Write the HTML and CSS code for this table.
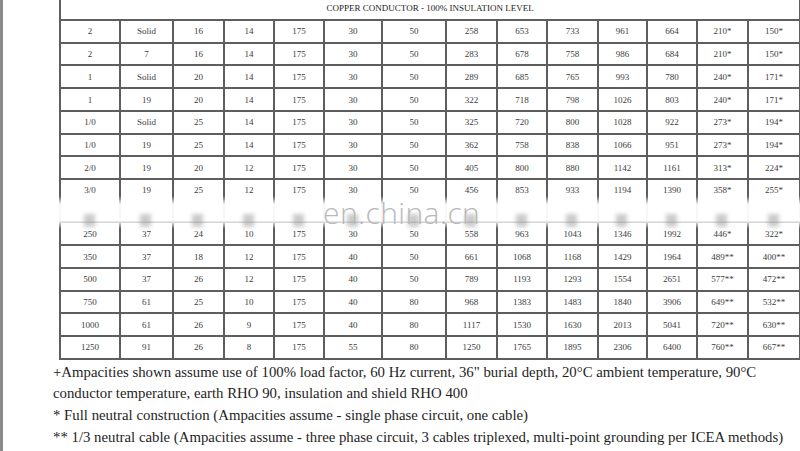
FILE: index.html
```html
<!DOCTYPE html>
<html>
<head>
<meta charset="utf-8">
<link rel="stylesheet" href="styles.css">
</head>
<body>
<div class="page">
  <div class="table-wrap">
    <table class="amp">
      <colgroup>
        <col class="c1"><col class="c2"><col class="c3"><col class="c4"><col class="c5"><col class="c6"><col class="c7"><col class="c8"><col class="c9"><col class="c10"><col class="c11"><col class="c12"><col class="c13"><col class="c14">
      </colgroup>
      <tr class="head"><td colspan="14">COPPER CONDUCTOR - 100% INSULATION LEVEL</td></tr>
      <tr><td>2</td><td>Solid</td><td>16</td><td>14</td><td>175</td><td>30</td><td>50</td><td>258</td><td>653</td><td>733</td><td>961</td><td>664</td><td>210*</td><td>150*</td></tr>
      <tr><td>2</td><td>7</td><td>16</td><td>14</td><td>175</td><td>30</td><td>50</td><td>283</td><td>678</td><td>758</td><td>986</td><td>684</td><td>210*</td><td>150*</td></tr>
      <tr><td>1</td><td>Solid</td><td>20</td><td>14</td><td>175</td><td>30</td><td>50</td><td>289</td><td>685</td><td>765</td><td>993</td><td>780</td><td>240*</td><td>171*</td></tr>
      <tr><td>1</td><td>19</td><td>20</td><td>14</td><td>175</td><td>30</td><td>50</td><td>322</td><td>718</td><td>798</td><td>1026</td><td>803</td><td>240*</td><td>171*</td></tr>
      <tr><td>1/0</td><td>Solid</td><td>25</td><td>14</td><td>175</td><td>30</td><td>50</td><td>325</td><td>720</td><td>800</td><td>1028</td><td>922</td><td>273*</td><td>194*</td></tr>
      <tr><td>1/0</td><td>19</td><td>25</td><td>14</td><td>175</td><td>30</td><td>50</td><td>362</td><td>758</td><td>838</td><td>1066</td><td>951</td><td>273*</td><td>194*</td></tr>
      <tr><td>2/0</td><td>19</td><td>20</td><td>12</td><td>175</td><td>30</td><td>50</td><td>405</td><td>800</td><td>880</td><td>1142</td><td>1161</td><td>313*</td><td>224*</td></tr>
      <tr class="before-gap"><td>3/0</td><td>19</td><td>25</td><td>12</td><td>175</td><td>30</td><td>50</td><td>456</td><td>853</td><td>933</td><td>1194</td><td>1390</td><td>358*</td><td>255*</td></tr>
      <tr class="gap"><td></td><td></td><td></td><td></td><td></td><td></td><td></td><td></td><td></td><td></td><td></td><td></td><td></td><td></td></tr>
      <tr><td>250</td><td>37</td><td>24</td><td>10</td><td>175</td><td>30</td><td>50</td><td>558</td><td>963</td><td>1043</td><td>1346</td><td>1992</td><td>446*</td><td>322*</td></tr>
      <tr><td>350</td><td>37</td><td>18</td><td>12</td><td>175</td><td>40</td><td>50</td><td>661</td><td>1068</td><td>1168</td><td>1429</td><td>1964</td><td>489**</td><td>400**</td></tr>
      <tr><td>500</td><td>37</td><td>26</td><td>12</td><td>175</td><td>40</td><td>50</td><td>789</td><td>1193</td><td>1293</td><td>1554</td><td>2651</td><td>577**</td><td>472**</td></tr>
      <tr><td>750</td><td>61</td><td>25</td><td>10</td><td>175</td><td>40</td><td>80</td><td>968</td><td>1383</td><td>1483</td><td>1840</td><td>3906</td><td>649**</td><td>532**</td></tr>
      <tr><td>1000</td><td>61</td><td>26</td><td>9</td><td>175</td><td>40</td><td>80</td><td>1117</td><td>1530</td><td>1630</td><td>2013</td><td>5041</td><td>720**</td><td>630**</td></tr>
      <tr><td>1250</td><td>91</td><td>26</td><td>8</td><td>175</td><td>55</td><td>80</td><td>1250</td><td>1765</td><td>1895</td><td>2306</td><td>6400</td><td>760**</td><td>667**</td></tr>
    </table>
    <div class="watermark">
      <div class="smudges">
        <span></span><span></span><span></span><span></span><span></span><span></span><span></span><span></span><span></span><span></span><span></span><span></span><span></span><span></span>
      </div>
      <div class="wm-text">en.china.cn</div>
    </div>
  </div>
  <div class="notes">
    <p>+Ampacities shown assume use of 100% load factor, 60 Hz current, 36" burial depth, 20°C ambient temperature, 90°C</p>
    <p>conductor temperature, earth RHO 90, insulation and shield RHO 400</p>
    <p>* Full neutral construction (Ampacities assume - single phase circuit, one cable)</p>
    <p>** 1/3 neutral cable (Ampacities assume - three phase circuit, 3 cables triplexed, multi-point grounding per ICEA methods)</p>
  </div>
</div>
</body>
</html>
```
FILE: styles.css
```css
html, body {
  margin: 0;
  padding: 0;
  background: #fff;
}

.page {
  width: 800px;
  height: 451px;
  box-sizing: border-box;
  border-left: 3px solid #8a8a8a;
  overflow: hidden;
  font-family: "Liberation Serif", "Times New Roman", serif;
}

.table-wrap {
  position: relative;
  padding-left: 56px;
}

.amp {
  border-collapse: collapse;
  table-layout: fixed;
  width: 740px;
}

.c1 { width: 60px; }
.c2 { width: 53px; }
.c3 { width: 51px; }
.c4 { width: 50px; }
.c5 { width: 50px; }
.c6 { width: 58px; }
.c7 { width: 64px; }
.c8 { width: 51px; }
.c9 { width: 50px; }
.c10 { width: 51px; }
.c11 { width: 49px; }
.c12 { width: 50px; }
.c13 { width: 51px; }
.c14 { width: 52px; }

.amp td {
  border: 2px solid #5e5e5e;
  height: 20.72px;
  padding: 0;
  text-align: center;
  vertical-align: middle;
  font-size: 9px;
  color: #3c3c3c;
  line-height: 10px;
}

.amp tr.head td {
  border-top: none;
  height: 16px;
  font-size: 9px;
  color: #222;
  vertical-align: top;
  padding-top: 3px;
}

.amp tr.before-gap td {
  border-bottom: none;
}

.amp tr.gap td {
  border-top: none;
  border-bottom: none;
}

.watermark {
  position: absolute;
  left: 56px;
  top: 196px;
  width: 741px;
  height: 33px;
  background: linear-gradient(to bottom, rgba(255,255,255,0) 0%, rgba(255,255,255,0.95) 25%, rgba(255,255,255,0.95) 75%, rgba(255,255,255,0) 100%);
}

.smudges {
  display: grid;
  grid-template-columns: 60px 53px 51px 50px 50px 58px 64px 51px 50px 51px 49px 50px 51px 52px;
  height: 100%;
  align-items: end;
}

.smudges span {
  justify-self: center;
  width: 11px;
  height: 13px;
  margin-bottom: 2px;
  background: rgba(140, 140, 140, 0.45);
  filter: blur(2px);
}

.wm-text {
  position: absolute;
  left: 264px;
  top: 6px;
  font-family: "Open Sans", "Liberation Sans", sans-serif;
  font-weight: 300;
  font-size: 30px;
  line-height: 22px;
  color: #b9b9b9;
  letter-spacing: 0.4px;
}

.notes {
  padding-left: 50px;
  padding-top: 2px;
}

.notes p {
  margin: 0;
  font-size: 14.8px;
  line-height: 21.7px;
  color: #1e1e1e;
  white-space: nowrap;
}
```
